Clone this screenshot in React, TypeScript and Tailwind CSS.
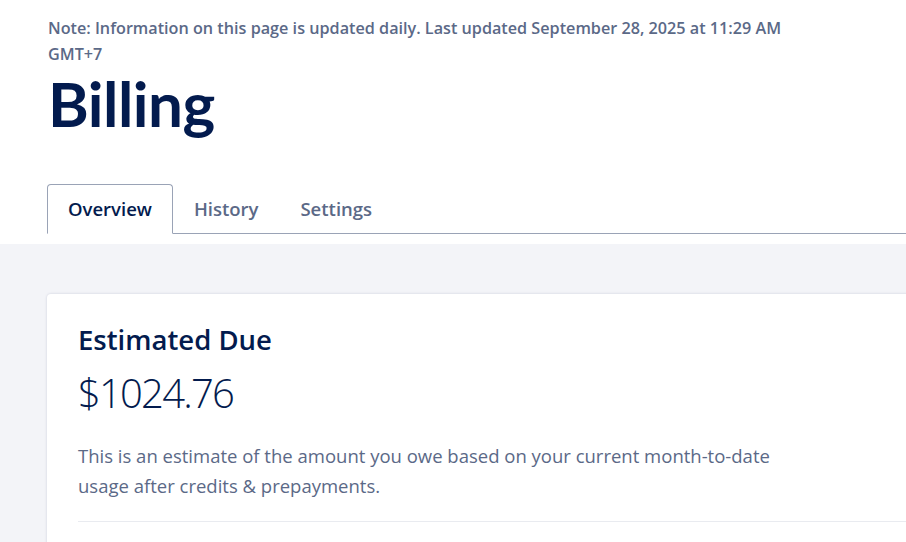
const tabs = ['Overview', 'History', 'Settings']

export default function App() {
  return (
    <div className="h-screen w-[906px] overflow-hidden bg-white font-['Open_Sans','Lato',sans-serif]">
      <header className="pl-12 pt-[15px]">
        <p className="max-w-[760px] text-[16.2px] font-semibold leading-[26px] text-[#5b6987]">
          Note: Information on this page is updated daily. Last updated September 28, 2025 at 11:29 AM GMT+7
        </p>
        <h1 className="font-['Lato',sans-serif] text-[62px] font-bold leading-[72px] tracking-[-0.5px] text-[#031b4e]">Billing</h1>
      </header>

      <div className="mt-[45px] pl-[47px]">
        <nav className="flex border-b border-[#9aa3b6]">
          {tabs.map((t, i) => (
            <button
              key={t}
              className={
                i === 0
                  ? '-mb-px rounded-t-[4px] border border-b-white border-[#9aa3b6] bg-white px-[20px] pb-[12px] pt-[11px] text-[18.5px] font-semibold leading-[25px] text-[#031b4e]'
                  : 'px-[21px] py-[12px] text-[18.5px] font-semibold leading-[25px] text-[#5b6987]'
              }
            >
              {t}
            </button>
          ))}
        </nav>
      </div>

      <main className="mt-[10px] h-full bg-[#f3f4f8] pl-[47px] pt-[50px]">
        <section className="-mr-6 h-full rounded-tl-[4px] bg-white pl-[31px] pr-6 pt-[28px] shadow-[0_0_2px_1px_rgba(3,27,78,0.08)]">
          <h2 className="text-[27.5px] font-semibold leading-[36px] text-[#031b4e]">Estimated Due</h2>
          <div className="mt-[10px] text-[40px] font-light leading-[50px] tracking-[-1.8px] text-[#031b4e]">$1024.76</div>
          <p className="mt-[23px] max-w-[720px] text-[18.5px] leading-[30px] text-[#5b6987]">
            This is an estimate of the amount you owe based on your current month-to-date usage after credits &amp; prepayments.
          </p>
          <div className="mt-[20px] border-t border-[#e9ebf0]" />
        </section>
      </main>
    </div>
  )
}
